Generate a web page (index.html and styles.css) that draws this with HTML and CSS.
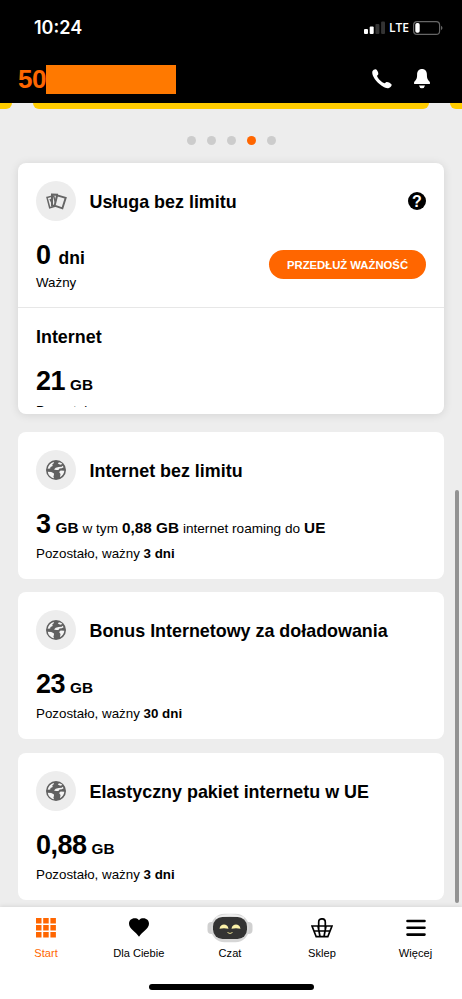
FILE: index.html
```html
<!DOCTYPE html>
<html lang="pl">
<head>
<meta charset="utf-8">
<title>Start</title>
<link rel="stylesheet" href="styles.css">
</head>
<body>
<svg class="defs" aria-hidden="true">
  <symbol id="globe" viewBox="0 0 20 20">
    <circle cx="10" cy="10" r="10" fill="#606060"/>
    <g fill="#f4f4f4">
      <path d="M1.700 8.800C2.200 5.200 4.500 2.700 7.600 1.900L8 3 6.300 4.300l.4 1.700-2.200.9-.3 1.500z"/>
      <path d="M1.800 11.700l3.400.3 2.600 1.200.2 1.800-.6 1.200.6 2C4.900 17.600 2.200 15.200 1.800 11.700z"/>
      <path d="M11.800 3.600l1.200-1.400 2.400.9.900.9-2 .8z"/>
      <path d="M8 9.500l1.700-1.800 3-.8 3-.2 1-.9.900 1.400-1.800 1-2.200.3-1.200 1.400-2.400.2z"/>
      <path d="M13.100 12l1.500-1.500 3.700.2c-.2 2.900-1.800 5.200-4.300 6.500l.5-3.200z"/>
    </g>
  </symbol>
</svg>

<header class="top">
  <div class="status">
    <span class="time">10:24</span>
    <div class="signals">
      <svg width="21" height="14" viewBox="0 0 21 14"><g fill="#fff"><rect y="8" width="4" height="5" rx="1"/><rect x="5.7" y="5.5" width="4" height="7.5" rx="1"/></g><g fill="#333"><rect x="11.4" y="3" width="4" height="10" rx="1"/><rect x="17.1" y=".5" width="3.9" height="12.5" rx="1"/></g></svg>
      <span class="lte">LTE</span>
      <svg width="30" height="14" viewBox="0 0 30 14"><rect x=".6" y=".6" width="26" height="12.8" rx="3.5" fill="none" stroke="#666" stroke-width="1.2"/><rect x="2.3" y="2" width="4.4" height="9.8" rx="1.7" fill="#fff"/><path d="M28 4.800q3 2.200 0 4.400z" fill="#666"/></svg>
    </div>
  </div>
  <div class="bar">
    <div class="number"><span class="digits">50</span><span class="mask"></span></div>
    <div class="actions">
      <svg width="20" height="20" viewBox="0 0 20 20"><path fill="#fff" d="M.4 2.300C1.100 1 2.600.1 3.700.3 5 .6 6.500 3.500 6.300 5c-.1 1-1.200 1.300-1.200 2.100.5 2.400 4.900 6.700 7.300 7.200.9.100 1.200-1 2.200-1.200 1.500-.2 4.300 1.300 5 2.500.4 1-1.700 3.200-3.300 3.600C11 20.200-1.300 8.700.4 2.300z"/></svg>
      <svg width="16" height="20" viewBox="0 0 16 20"><path fill="#fff" d="M3.100 5.400C3.100 2.200 5 0 8 0s4.900 2.200 4.900 5.400c0 4.100.9 5.600 3 7.500V15H.1v-2.100c2.100-1.900 3-3.400 3-7.500zM5 16.400h6q-.6 2.800-3 2.800T5 16.400z"/></svg>
    </div>
  </div>
</header>

<main class="content">
  <div class="banners"><i></i><i></i><i></i></div>
  <div class="dots"><i></i><i></i><i></i><i class="on"></i><i></i></div>

  <section class="card main-card">
    <div class="head">
      <span class="circle"><svg width="21" height="17" viewBox="0 0 21 17" fill="#ededed" stroke="#656565" stroke-width="1.500"><path d="M1 4.400l5-1.300 2.200 10.300-4.500 1.300z"/><path stroke-width="2" d="M6 1.500l5 .3-1 11.200-4-.5z"/><path d="M7.500 2.500l2 7M4 6l2.500 5"/><path stroke-width="1.900" d="M11.200 2.300l8.500 2.500-3.300 10.500-7.800-2.600z"/></svg></span>
      <h2>Usługa bez limitu</h2>
      <span class="help">?</span>
    </div>
    <div class="validity">
      <div>
        <p class="amount"><b>0</b><span class="days">dni</span></p>
        <p class="note">Ważny</p>
      </div>
      <button>PRZEDŁUŻ WAŻNOŚĆ</button>
    </div>
    <div class="allowance">
      <h2>Internet</h2>
      <p class="amount"><b>21</b><span class="unit">GB</span></p>
      <p class="note">Pozostało</p>
    </div>
  </section>

  <section class="card">
    <div class="head"><span class="circle"><svg width="20" height="20"><use href="#globe"/></svg></span><h2>Internet bez limitu</h2></div>
    <p class="amount"><b>3</b><span class="unit">GB</span><span class="small">w tym</span><span class="unit">0,88 GB</span><span class="small">internet roaming do</span><span class="unit">UE</span></p>
    <p class="note">Pozostało, ważny <b>3 dni</b></p>
  </section>
  <section class="card">
    <div class="head"><span class="circle"><svg width="20" height="20"><use href="#globe"/></svg></span><h2>Bonus Internetowy za doładowania</h2></div>
    <p class="amount"><b>23</b><span class="unit">GB</span></p>
    <p class="note">Pozostało, ważny <b>30 dni</b></p>
  </section>
  <section class="card">
    <div class="head"><span class="circle"><svg width="20" height="20"><use href="#globe"/></svg></span><h2>Elastyczny pakiet internetu w UE</h2></div>
    <p class="amount"><b>0,88</b><span class="unit">GB</span></p>
    <p class="note">Pozostało, ważny <b>3 dni</b></p>
  </section>
  <div class="scrollbar"></div>
</main>

<footer class="bottom">
  <nav>
    <a class="active"><svg width="20" height="20" viewBox="0 0 20 20" fill="#ff6600"><path d="M0 0h5.500v5.500H0zM7.200 0h5.500v5.500H7.200zM14.400 0h5.500v5.500h-5.500zM0 7h5.500v5.500H0zM7.200 7h5.500v5.500H7.200zM14.400 7h5.500v5.500h-5.500zM0 14h5.500v5.500H0zM7.200 14h5.500v5.500H7.200zM14.400 14h5.500v5.500h-5.500z"/></svg><span>Start</span></a>
    <a><svg width="20" height="20" viewBox="0 0 20 20"><path d="M10 2.300C8.800.5 7.200.3 5.700.3 2.300.3 0 2.600 0 5.800c0 5.200 6.800 8 10 13 3.200-5 10-7.800 10-13C20 2.600 17.700.3 14.300.3c-1.500 0-3.100.2-4.300 2z"/></svg><span>Dla Ciebie</span></a>
    <a><svg class="robot" width="46" height="30" viewBox="0 0 46 30"><rect x=".5" y="9" width="45" height="12" rx="4" fill="#d0d0d0"/><rect x="4" y=".7" width="38" height="28.600" rx="13.500" fill="#d6d6d6"/><path d="M9 5q14-6 28 0" fill="none" stroke="#eee" stroke-width="2"/><rect x="6" y="4" width="34" height="22" rx="9.500" fill="#333"/><path fill="#fbf1a9" d="M12.500 15.800c.8-5.600 8.200-5.600 9 0q-4.500-1-9 0zM24.500 15.800c.8-5.600 8.200-5.600 9 0q-4.500-1-9 0z"/><path d="M20.500 19.500q2.500 2 5 0" fill="none" stroke="#e5db91"/></svg><span>Czat</span></a>
    <a><svg width="22" height="20" viewBox="0 0 22 20" fill="none" stroke="#000" stroke-width="1.700"><path d="M7.700 11V4.200q0-3.400 3.300-3.400t3.300 3.400V11M1 8h20l-4.200 10.700H5.200zM3 13h16M7 8l2 10.500M15 8l-2 10.500"/></svg><span>Sklep</span></a>
    <a><svg width="20" height="20" viewBox="0 0 20 20"><path d="M1.500 3h17M1.500 9.800h17M1.500 16.600h17" stroke="#000" stroke-width="2.600" stroke-linecap="round"/></svg><span>Więcej</span></a>
  </nav>
  <div class="home"></div>
</footer>
</body>
</html>
```
FILE: styles.css
```css
* { box-sizing: border-box; margin: 0; padding: 0; }
body { width: 462px; height: 999px; overflow: hidden; display: flex; flex-direction: column; background: #ededed; font-family: "Liberation Sans", Arial, sans-serif; color: #000; }
svg { display: block; flex: none; }
.defs { position: absolute; width: 0; height: 0; }
.top { height: 103px; flex: none; background: #000; color: #fff; }
.status { height: 55px; display: flex; align-items: center; justify-content: space-between; padding: 0 19px 0 34px; }
.time { font: 600 18px/22px Inter, sans-serif; }
.signals { display: flex; align-items: center; }
.lte { font: 600 12px/16px "Open Sans", sans-serif; width: 24px; margin-left: 4px; }
.bar { display: flex; justify-content: space-between; padding: 9px 32px 0 18px; }
.number { display: flex; color: #ff6600; font: bold 26px/30px "Liberation Sans", sans-serif; letter-spacing: -.5px; }
.digits { width: 28px; }
.mask { width: 130px; height: 29px; margin-top: 1px; background: #ff7900; }
.actions { display: flex; gap: 22px; padding-top: 5px; }
.content { height: 804px; flex: none; position: relative; padding: 0 18px; overflow: hidden; }
.banners { display: flex; gap: 21px; width: 850px; margin-left: -402px; height: 6px; }
.banners i { flex: none; width: 396px; background: #ffcc00; border-radius: 0 0 8px 8px; }
.dots { display: flex; justify-content: center; gap: 11px; padding: 27px 0 18px; }
.dots i { width: 9px; height: 9px; border-radius: 50%; background: #ccc; }
.dots .on { background: #ff6600; }
.card { height: 147px; background: #fff; border-radius: 8px; padding: 18px; margin-bottom: 13.600px; }
.main-card { height: 250.500px; margin-bottom: 18px; padding: 18px 0 6px; box-shadow: 0 1px 10px #0000001c; }
.head { display: flex; align-items: center; height: 40px; }
.main-card .head { padding: 0 18px; }
.circle { width: 40px; height: 40px; border-radius: 50%; background: #ededed; display: grid; place-items: center; margin-right: 13.500px; }
h2 { font-size: 17.900px; line-height: 22px; padding-top: 2.500px; white-space: nowrap; }
.help { width: 18px; height: 18px; margin-left: auto; background: #000; border-radius: 50%; color: #fff; font-weight: bold; font-size: 16px; line-height: 19px; text-align: center; }
.validity { height: 87px; border-bottom: 1px solid #e7e7e7; display: flex; justify-content: space-between; padding: 0 18px; }
button { width: 157px; height: 29px; margin-top: 29px; border: 0; border-radius: 15px; background: #ff6600; color: #fff; font: bold 11.300px "Liberation Sans", sans-serif; white-space: nowrap; }
.amount { height: 31px; margin-top: 19px; display: flex; align-items: baseline; white-space: nowrap; line-height: 31px; }
.amount b { font-size: 27px; letter-spacing: -.5px; }
.days { font-size: 17.500px; font-weight: bold; margin-left: 8px; }
.unit { font-size: 15.300px; font-weight: bold; margin-left: 5px; }
.small { font-size: 13.600px; margin-left: 4px; }
.small + .unit { margin-left: 4px; }
.note { font-size: 13.350px; line-height: 18px; margin-top: 5px; white-space: nowrap; }
.validity .note { margin-top: 3px; }
.allowance { height: 99px; overflow: hidden; padding: 15.500px 18px 0; }
.allowance .amount { margin-top: 17.500px; }
.allowance .note { margin-top: 5px; }
.scrollbar { position: absolute; right: 3px; top: 387px; width: 4px; height: 413px; border-radius: 2px; background: #929292; }
.bottom { height: 92px; flex: none; background: #fff; position: relative; box-shadow: 0 0 5px #00000022; }
nav { display: grid; grid-template-columns: 92px 93.500px 89px 95px 92px; padding-top: 11px; height: 79px; }
nav a { display: flex; flex-direction: column; align-items: center; font-size: 11.100px; line-height: 16px; }
nav span { margin-top: 6.500px; white-space: nowrap; }
.robot { margin: -5px 0; }
.active { color: #ff6600; }
.home { width: 165px; height: 6px; border-radius: 3px; background: #000; margin: -2px auto 0; }
```
